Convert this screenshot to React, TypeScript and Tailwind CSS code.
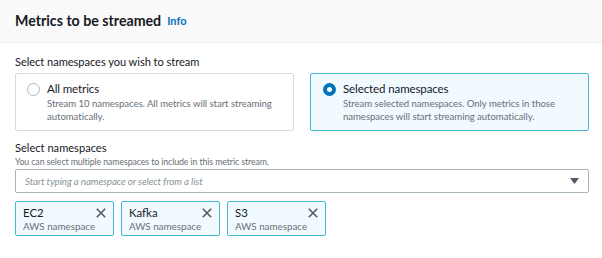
const FONT = "font-['Lato','Open_Sans',sans-serif]"

const TOKENS = ['EC2', 'Kafka', 'S3']

function Radio({ checked }: { checked: boolean }) {
  return checked ? (
    <span className="mt-[2px] box-border block h-[13px] w-[13px] shrink-0 rounded-full border-[4px] border-[#0073bb] bg-white" />
  ) : (
    <span className="mt-[2px] box-border block h-[13px] w-[13px] shrink-0 rounded-full border border-[#aab7b8] bg-white" />
  )
}

function OptionCard({
  title,
  description,
  checked,
}: {
  title: string
  description: string
  checked: boolean
}) {
  return (
    <div
      className={
        checked
          ? 'flex gap-[7px] rounded-[2px] border border-[#44b9d6] bg-[#f1faff] pl-[12px] pr-[10px] pt-[7px] pb-[7px]'
          : 'flex gap-[7px] rounded-[2px] border border-[#d5dbdb] bg-white pl-[11px] pr-[10px] pt-[7px] pb-[7px]'
      }
    >
      <Radio checked={checked} />
      <div>
        <div className="text-[11.5px] leading-[16px] tracking-[-0.1px] text-[#16191f]">{title}</div>
        <div className="text-[9.6px] leading-[13px] tracking-[-0.05px] text-[#687078]">{description}</div>
      </div>
    </div>
  )
}

export default function App() {
  return (
    <div className={`h-[258px] w-[602px] bg-white ${FONT}`}>
      <div className="flex h-[43px] items-center gap-[6px] border-b border-[#eaeded] bg-[#fafafa] px-[15px] pb-[1px]">
        <h2 className="text-[14.2px] font-bold text-[#16191f]">Metrics to be streamed</h2>
        <a className="mt-[2px] text-[11px] font-bold text-[#0073bb]">Info</a>
      </div>

      <div className="pl-[15px] pr-[13px] pt-[11px]">
        <div className="text-[11.1px] leading-[16px] tracking-[-0.05px] text-[#16191f]">
          Select namespaces you wish to stream
        </div>

        <div className="mt-[3px] grid grid-cols-2 gap-[16px]">
          <OptionCard
            checked={false}
            title="All metrics"
            description="Stream 10 namespaces. All metrics will start streaming automatically."
          />
          <OptionCard
            checked
            title="Selected namespaces"
            description="Stream selected namespaces. Only metrics in those namespaces will start streaming automatically."
          />
        </div>

        <div className="mt-[9px] text-[11.1px] leading-[15px] text-[#16191f]">Select namespaces</div>
        <div className="text-[8.8px] leading-[13px] tracking-[-0.1px] text-[#687078]">
          You can select multiple namespaces to include in this metric stream.
        </div>

        <div className="mt-[1px] flex h-[24px] items-center justify-between rounded-[2px] border border-[#aab7b8] bg-white pl-[9px] pr-[9px]">
          <span className="text-[9.8px] italic tracking-[-0.1px] text-[#879596]">
            Start typing a namespace or select from a list
          </span>
          <svg width="9" height="6" viewBox="0 0 9 6" className="shrink-0">
            <path d="M0 0 H9 L4.5 6 Z" fill="#545b64" />
          </svg>
        </div>

        <div className="mt-[8px] flex gap-[7px]">
          {TOKENS.map((t) => (
            <div
              key={t}
              className="flex h-[35px] w-[99px] justify-between rounded-[2px] border border-[#44b9d6] bg-[#f1faff] pl-[7px] pr-[7px] pt-[3px]"
            >
              <div className="whitespace-nowrap">
                <div className="text-[11.4px] leading-[15px] text-[#16191f]">{t}</div>
                <div className="text-[9.8px] leading-[13px] text-[#687078]">AWS namespace</div>
              </div>
              <svg width="10" height="10" viewBox="0 0 10 10" className="mt-[3px] shrink-0">
                <path d="M0.8 0.8 L9.2 9.2 M9.2 0.8 L0.8 9.2" stroke="#545b64" strokeWidth="1.6" fill="none" />
              </svg>
            </div>
          ))}
        </div>
      </div>
    </div>
  )
}
